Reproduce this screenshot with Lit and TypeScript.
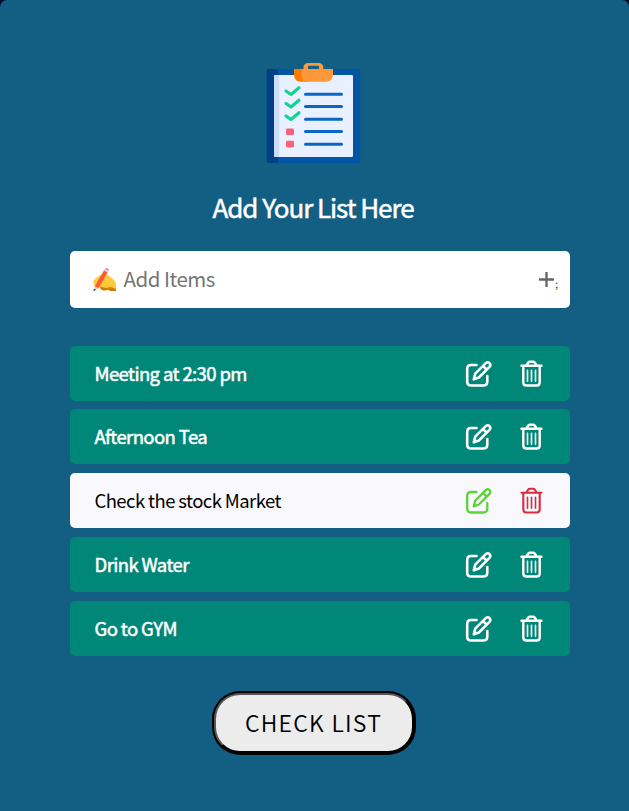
import { LitElement, html, css, svg } from "lit";
import { customElement, property } from "lit/decorators.js";

const clipboardArt = svg`
  <path fill="#003f82" d="M.7 7h14v94H2.200Q.7 101 .7 99.500z"/>
  <path fill="#0055a5" d="M12 7h82.200v94H12z"/>
  <rect x="8" y="13" width="79" height="82" rx="1.200" fill="#e9f0ff"/>
  <path fill="#cbdcfc" d="M9.200 13h4v82h-4Q8 95 8 93.800V14.200Q8 13 9.200 13z"/>
  <path fill="#ff9838" fill-rule="evenodd" d="M37.500 8V4.500Q38.500 1 42 1h11q3.500 0 4.300 3.500V8zM42 7h11V4.800q0-1-1-1h-9q-1 0-1 1z"/>
  <path fill="#ff7b00" d="M28 7h16v12.700h-9q-7-.5-7-7z"/>
  <path fill="#ff9838" d="M35.500 7H67v5.700q-.5 7-7 7H40q-4.500-1-4.500-7z"/>
  <path fill="none" stroke="#0b66c3" stroke-width="3" stroke-linecap="round" d="M39.500 32.200h36M39.500 44.600h36M39.500 57.200h36M39.500 69.600h36M39.500 82.200h36"/>
  <path fill="none" stroke="#13d391" stroke-width="3.100" stroke-linecap="round" stroke-linejoin="round" d="M20 29l5 3.500 8-6.800M20 41.500l5 3.500 8-6.800M20 54l5 3.500 8-6.800"/>
  <rect x="20" y="66.500" width="8" height="6.600" rx="1.400" fill="#fb6079"/>
  <rect x="20" y="78.800" width="8" height="6.600" rx="1.400" fill="#fb6079"/>
`;

@customElement("todo-row")
export class TodoRow extends LitElement {
  @property() label = "";
  @property({ type: Boolean, reflect: true }) hovered = false;

  static styles = css`
    :host {
      display: flex;
      align-items: center;
      box-sizing: border-box;
      height: 55px;
      padding: 0 27px 0 24.5px;
      border-radius: 5px;
      background: #008778;
      color: #fff;
      --edit: #fff;
      --remove: #fff;
    }
    :host([hovered]) {
      background: #f9f9fd;
      color: #000;
      --edit: #5dd335;
      --remove: #d82b40;
    }
    .label {
      flex: 1;
      font-size: 18.5px;
      font-weight: 400;
      -webkit-text-stroke: 0.5px currentColor;
      letter-spacing: -0.6px;
      line-height: 30px;
      padding-bottom: 1px;
      white-space: nowrap;
    }
    :host([hovered]) .label {
      -webkit-text-stroke: 0;
      letter-spacing: -0.58px;
    }
    svg {
      display: block;
      fill: none;
      stroke-linecap: round;
      stroke-linejoin: round;
    }
    .edit {
      stroke: var(--edit);
      stroke-width: 2.6;
      margin-right: 28.5px;
    }
    .remove {
      stroke: var(--remove);
      stroke-width: 2.4;
    }
    :host([hovered]) .edit {
      stroke-width: 2.3;
    }
    :host([hovered]) .remove {
      stroke-width: 2.1;
    }
    .slats {
      stroke-width: 1.6;
    }
  `;

  render() {
    return html`
      <span class="label">${this.label}</span>
      <svg class="edit" width="27" height="28" viewBox="0 0 27 28">
        <path d="M11.500 5H6Q2.200 5 2.200 9v12.500q0 4 3.800 4h12.300q4 0 4-4V16" />
        <path d="M8.800 19.300l1.400-5.600L20.800 3.100q1.900-1.700 3.700 0 1.700 1.900 0 3.800L13.900 17.500zM18 6l3.600 3.600" />
      </svg>
      <svg class="remove" width="23" height="28" viewBox="0 0 23 28">
        <path d="M1.500 5.800h20M3.300 6v16.500q0 3 3 3h10.400q3 0 3-3V6M6.300 5.500l2-3q.6-.7 1.500-.7h3.400q.9 0 1.500.7l2 3" />
        <path class="slats" d="M7.500 10.300v10.900M11.500 10.300v10.900M15.500 10.300v10.900" />
      </svg>
    `;
  }
}

@customElement("app-root")
export class AppRoot extends LitElement {
  private items = [
    { label: "Meeting at 2:30 pm", hovered: false },
    { label: "Afternoon Tea", hovered: false },
    { label: "Check the stock Market", hovered: true },
    { label: "Drink Water", hovered: false },
    { label: "Go to GYM", hovered: false },
  ];

  static styles = css`
    :host {
      display: block;
      height: 811px;
      background: #050a24;
      font-family: "Noto Sans CJK SC", "Noto Sans", sans-serif;
    }
    .panel {
      display: flex;
      flex-direction: column;
      align-items: center;
      box-sizing: border-box;
      height: 811px;
      padding: 62px 59px 0 70px;
      border-radius: 7px 7px 0 0;
      background: #135e83;
    }
    .art {
      display: block;
      margin-right: 14px;
    }
    h1 {
      margin: 23px 14px 2px 0;
      line-height: 40px;
      font-size: 26px;
      font-weight: 400;
      letter-spacing: -1.05px;
      color: #fff;
      -webkit-text-stroke: 0.5px #fff;
      white-space: nowrap;
    }
    .entry {
      display: flex;
      align-items: center;
      box-sizing: border-box;
      width: 500px;
      height: 57px;
      margin-top: 22px;
      padding: 0 12px 0 22px;
      border-radius: 5px;
      background: #fff;
      color: #757575;
    }
    .hint {
      flex: 1;
      margin-left: 7.5px;
      font-size: 20.5px;
      font-weight: 400;
      letter-spacing: -0.5px;
      line-height: 34px;
      padding-bottom: 4px;
      white-space: nowrap;
    }
    .semi {
      font-size: 10px;
      line-height: 14px;
      padding-top: 8px;
      color: #333;
    }
    .list {
      display: flex;
      flex-direction: column;
      width: 500px;
      margin-top: 38px;
    }
    todo-row + todo-row {
      margin-top: 9px;
    }
    todo-row:nth-child(2) {
      margin-top: 8px;
    }
    button {
      box-sizing: border-box;
      width: 200px;
      height: 60px;
      margin: 37px 12px 0 0;
      padding: 0 1px 2px 0;
      border: 2px solid;
      border-color: #555 #000 #000 #555;
      border-radius: 26px;
      box-shadow: 0 0 0 2px #000;
      background: #ececec;
      color: #000;
      font-family: inherit;
      font-size: 23px;
      font-weight: 350;
      letter-spacing: 1.25px;
      white-space: nowrap;
    }
  `;

  render() {
    return html`
      <main class="panel">
        <svg class="art" width="95" height="102" viewBox="0 0 95 102">${clipboardArt}</svg>
        <h1>Add Your List Here</h1>
        <div class="entry">
          <svg width="24" height="24" viewBox="0 0 24 24">
            <path fill="#ffc83d" d="M1.500 12.500L8 7l4-.8 4 .8 5 4q3 2.500 3 6V22h-4l-3-1.500-5 .8-2-2-5 .5-3-2z" />
            <path fill="#d67d00" d="M8 18.500l6 1.500 5-1 5 2v2h-6l-2-1.200-4 1-3.500-1.500z" />
            <path fill="#ff5a2f" d="M12.500 1.500l3.800 1.700L6.500 20l-3.700-1.500z" />
            <path fill="#d9d9e0" d="M12 2.500L13 .8l3.700 1.700-1 1.900z" />
            <path fill="#f34b6b" d="M12.900.8Q14-.3 15.500.5q1.700.8 1.200 2z" />
            <path fill="#f8c9a8" d="M2.800 18.500L6.500 20 2 23z" />
            <path fill="#222" d="M1.900 20.800l2 1-2.400 1.500z" />
          </svg>
          <span class="hint">Add Items</span>
          <svg width="17" height="17" viewBox="0 0 17 17">
            <path fill="none" stroke="#666" stroke-width="2.300" d="M1 8.500h15M8.500 1v15" />
          </svg>
          <span class="semi">;</span>
        </div>
        <div class="list">
          ${this.items.map((i) => html`<todo-row label=${i.label} ?hovered=${i.hovered}></todo-row>`)}
        </div>
        <button>CHECK LIST</button>
      </main>
    `;
  }
}
